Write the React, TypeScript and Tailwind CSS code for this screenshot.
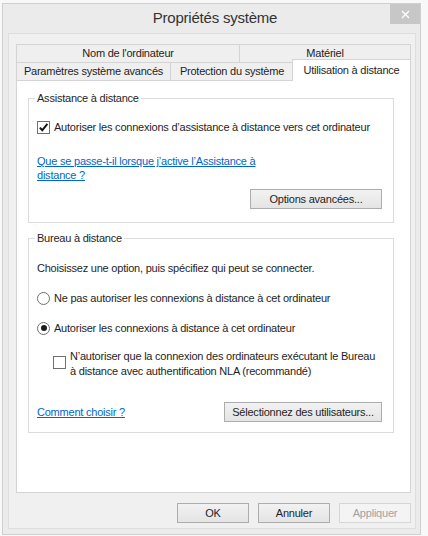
import { ReactNode } from 'react'

function Checkbox({ checked }: { checked?: boolean }) {
  return (
    <span className="flex h-[13px] w-[13px] shrink-0 items-center justify-center border border-[#707070] bg-white">
      {checked && (
        <svg width="11" height="11" viewBox="0 0 11 11">
          <path d="M1.8 5.6 L4.3 8.2 L9.4 1.9" fill="none" stroke="#111" strokeWidth="1.9" />
        </svg>
      )}
    </span>
  )
}

function Radio({ checked }: { checked?: boolean }) {
  return (
    <span className="flex h-[13px] w-[13px] shrink-0 items-center justify-center rounded-full border border-[#707070] bg-white">
      {checked && <span className="h-[6px] w-[6px] rounded-full bg-[#1a1a1a]" />}
    </span>
  )
}

function Button({ children, className = '', disabled }: { children: ReactNode; className?: string; disabled?: boolean }) {
  return (
    <div
      className={`flex h-[20px] items-center justify-center border ${
        disabled
          ? 'border-[#d6d6d6] bg-[#f4f4f4] text-[#a2a2a2]'
          : 'border-[#adadad] bg-gradient-to-b from-[#f2f2f2] to-[#e4e4e4] text-[#1e1e1e]'
      } ${className}`}
    >
      {children}
    </div>
  )
}

function GroupBox({ title, children, className = '' }: { title: string; children: ReactNode; className?: string }) {
  return (
    <div className={`ml-[11px] flex w-[366px] flex-col border border-[#dcdcdc] pl-[8px] pr-[11px] ${className}`}>
      <span className="-mt-[8px] -ml-[2px] self-start bg-white px-[2px] leading-[14px]">{title}</span>
      {children}
    </div>
  )
}

export default function App() {
  return (
    <div className="flex h-[536px] w-[428px] items-start overflow-hidden bg-[#f8f8f8] font-['Liberation_Sans',Arial,sans-serif] text-[11px] tracking-[-0.22px] text-[#1e1e1e]">
      <div className="relative ml-[2px] mt-[3px] flex h-[532px] w-[419px] flex-col border border-[#cfcfcf] bg-[#ebebeb] pl-[5px] pr-[4px]">
        <div className="flex h-[29px] shrink-0 items-center justify-center pl-[6px] text-[15px] text-[#333]">
          Propriétés système
        </div>
        <div className="absolute right-0 top-0 flex h-[20px] w-[30px] items-center justify-center bg-[#c7c7c7]">
          <svg width="9" height="9" viewBox="0 0 9 9">
            <path d="M1 1 L8 8 M8 1 L1 8" stroke="#fff" strokeWidth="1.3" />
          </svg>
        </div>

        <div className="mb-[5px] flex flex-1 flex-col border border-[#dedede] bg-[#f0f0f0] pl-[7px] pt-[10px]">
          {/* onglets */}
          <div className="flex h-[18px] w-[395px]">
            <div className="flex w-[224px] items-center justify-center border border-b-0 border-[#d4d4d4] bg-[#efefef]">
              Nom de l'ordinateur
            </div>
            <div className="-ml-px flex flex-1 items-center justify-center border border-b-0 border-[#d4d4d4] bg-[#efefef]">
              Matériel
            </div>
          </div>
          <div className="flex h-[18px] w-[395px] items-end">
            <div className="flex h-full w-[155px] items-center justify-center border border-b-0 border-[#d4d4d4] bg-[#efefef]">
              Paramètres système avancés
            </div>
            <div className="-ml-px flex h-full w-[124px] items-center justify-center border border-b-0 border-[#d4d4d4] bg-[#efefef]">
              Protection du système
            </div>
            <div className="relative z-10 -mb-px -ml-[2px] flex h-[22px] flex-1 items-start justify-center border border-b-0 border-[#d4d4d4] bg-white pt-[2px]">
              Utilisation à distance
            </div>
          </div>

          {/* panneau */}
          <div className="flex h-[413px] w-[395px] flex-col border border-[#d4d4d4] bg-white">
            <GroupBox title="Assistance à distance" className="mt-[17px] pb-[13px]">
              <div className="mt-[14px] flex h-[16px] items-center gap-[4px]">
                <Checkbox checked />
                <span>Autoriser les connexions d’assistance à distance vers cet ordinateur</span>
              </div>
              <div className="mt-[19px] w-[240px] leading-[14px] text-[#0066cc] underline">
                Que se passe-t-il lorsque j’active l’Assistance à distance ?
              </div>
              <Button className="mt-[7px] w-[132px] self-end">Options avancées...</Button>
            </GroupBox>

            <GroupBox title="Bureau à distance" className="mt-[15px] pb-[10px]">
              <div className="mt-[16px] leading-[14px]">Choisissez une option, puis spécifiez qui peut se connecter.</div>
              <div className="mt-[15px] flex h-[16px] items-center gap-[4px]">
                <Radio />
                <span>Ne pas autoriser les connexions à distance à cet ordinateur</span>
              </div>
              <div className="mt-[14px] flex h-[16px] items-center gap-[4px]">
                <Radio checked />
                <span>Autoriser les connexions à distance à cet ordinateur</span>
              </div>
              <div className="mt-[13px] flex items-start gap-[4px] pl-[16px]">
                <span className="mt-[7px]">
                  <Checkbox />
                </span>
                <span className="w-[316px] leading-[15px]">
                  N’autoriser que la connexion des ordinateurs exécutant le Bureau à distance avec authentification NLA (recommandé)
                </span>
              </div>
              <div className="mt-[23px] flex h-[20px] items-center justify-between">
                <span className="text-[#0066cc] underline">Comment choisir ?</span>
                <Button className="w-[158px]">Sélectionnez des utilisateurs...</Button>
              </div>
            </GroupBox>
          </div>

          {/* boutons */}
          <div className="mt-[10px] flex w-[395px] justify-end gap-[9px]">
            <Button className="w-[72px]">OK</Button>
            <Button className="w-[72px]">Annuler</Button>
            <Button className="w-[72px]" disabled>
              Appliquer
            </Button>
          </div>
        </div>
      </div>
    </div>
  )
}
